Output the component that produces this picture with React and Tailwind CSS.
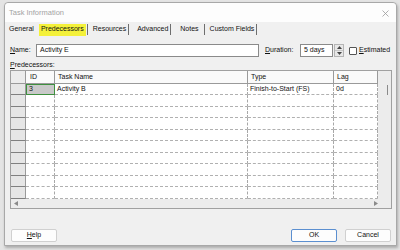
import React from "react";

const F = { fontFamily: '"Liberation Sans", Arial, sans-serif' };

function Tab({ children, active }) {
  return (
    <div className="flex items-center h-full">
      <div className={"h-[12px] flex items-center px-[2px] " + (active ? "bg-[#f4f13a]" : "")}>{children}</div>
    </div>
  );
}

function Sep() {
  return <div className="w-px h-[11px] bg-[#6e6e6e] self-center" />;
}

const rowHeights = [11, 12, 11, 12, 11, 12, 11, 12, 11, 12];

export default function App() {
  return (
    <div className="w-[400px] h-[250px] bg-[#e4e4e4] pt-[2px] pl-[4px] overflow-hidden text-[7px] text-[#111]" style={F}>
      <div className="w-[393px] h-[244px] bg-[#f0f0f0] border border-[#a8a8a8] rounded-t-[4px] shadow-[1px_2px_3px_rgba(0,0,0,0.25)] flex flex-col">
        <div className="h-[19px] bg-[#fdfdfd] rounded-t-[4px] flex items-center justify-between pl-[4px] pr-[7px]">
          <span className="text-[#a3a3a3] text-[7.5px] mt-[1px]">Task Information</span>
          <svg width="7" height="7" viewBox="0 0 7 7" className="mt-[1px]">
            <path d="M0.5 0.5 L6.5 6.5 M6.5 0.5 L0.5 6.5" stroke="#9a9a9a" strokeWidth="0.8" />
          </svg>
        </div>
        <div className="h-[15px] flex items-center pl-[2px]">
          <Tab>General</Tab>
          <div className="w-[3px]" />
          <Tab active>Predecessors</Tab>
          <div className="w-[1px]" />
          <Sep />
          <div className="w-[3px]" />
          <Tab>Resources</Tab>
          <Sep />
          <div className="w-[6px]" />
          <Tab>Advanced</Tab>
          <Sep />
          <div className="w-[7px]" />
          <Tab>Notes</Tab>
          <div className="w-[3px]" />
          <Sep />
          <div className="w-[3px]" />
          <Tab>Custom Fields</Tab>
          <Sep />
        </div>
        <div className="flex-1 flex flex-col pl-[5px] pr-[5px]">
          <div className="mt-[7px] h-[13px] flex items-center">
            <span className="w-[26px]"><u>N</u>ame:</span>
            <div className="w-[223px] h-[13px] bg-white border border-[#8a8a8a] flex items-center pl-[3px]">Activity E</div>
            <span className="ml-[6px] w-[35px]"><u>D</u>uration:</span>
            <div className="w-[33px] h-[13px] bg-white border border-[#8a8a8a] flex items-center pl-[3px]">5 days</div>
            <div className="ml-[1px] w-[10px] h-[13px] flex flex-col border border-[#b5b5b5] bg-[#e8e8e8]">
              <div className="flex-1 flex items-center justify-center border-b border-[#c8c8c8]">
                <svg width="5" height="3" viewBox="0 0 5 3"><path d="M0 3 L2.5 0 L5 3 Z" fill="#444" /></svg>
              </div>
              <div className="flex-1 flex items-center justify-center">
                <svg width="5" height="3" viewBox="0 0 5 3"><path d="M0 0 L2.5 3 L5 0 Z" fill="#444" /></svg>
              </div>
            </div>
            <div className="ml-[5px] w-[8px] h-[8px] border border-[#555] rounded-[1px] bg-white" />
            <span className="ml-[2px]"><u>E</u>stimated</span>
          </div>
          <div className="mt-[3px] h-[9px] leading-[9px]"><u>P</u>redecessors:</div>
          <div className="mt-[1px] w-[382px] h-[139px] border border-[#a0a0a0] bg-[#ececec] flex flex-col">
            <div className="flex">
              <div className="flex flex-col">
                <div className="flex h-[13px] border-b border-[#9a9a9a]">
                  <div className="w-[15px] bg-[#ececec] border-r border-[#9a9a9a]" />
                  <div className="w-[29px] bg-[#fafafa] border-r border-[#9a9a9a] pl-[4px] flex items-center">ID</div>
                  <div className="w-[193px] bg-[#fafafa] border-r border-[#9a9a9a] pl-[3px] flex items-center">Task Name</div>
                  <div className="w-[86px] bg-[#fafafa] border-r border-[#9a9a9a] pl-[3px] flex items-center">Type</div>
                  <div className="w-[44px] bg-[#fafafa] border-r border-[#9a9a9a] pl-[3px] flex items-center">Lag</div>
                </div>
                {rowHeights.map((h, i) => (
                  <div key={i} className="flex" style={{ height: h }}>
                    <div className="w-[15px] bg-[#e6e6e6] border-r border-[#9a9a9a] border-b border-b-[#808080]" />
                    {i === 0 ? (
                      <>
                        <div className="w-[29px] bg-[#c9c9c9] border border-[#3f8f3f] pl-[2px] flex items-center">3</div>
                        <div className="w-[193px] bg-white border-r border-[#a8a8a8] border-b border-dashed border-b-[#b0b0b0] pl-[2px] flex items-center">Activity B</div>
                        <div className="w-[86px] bg-white border-r border-[#a8a8a8] border-b border-dashed border-b-[#b0b0b0] pl-[2px] flex items-center">Finish-to-Start (FS)</div>
                        <div className="w-[44px] bg-white border-r border-[#a8a8a8] border-b border-dashed border-b-[#b0b0b0] pl-[2px] flex items-center">0d</div>
                      </>
                    ) : (
                      <>
                        <div className="w-[29px] bg-white border-r border-[#a8a8a8] border-b border-dashed border-b-[#b0b0b0]" />
                        <div className="w-[193px] bg-white border-r border-[#a8a8a8] border-b border-dashed border-b-[#b0b0b0]" />
                        <div className="w-[86px] bg-white border-r border-[#a8a8a8] border-b border-dashed border-b-[#b0b0b0]" />
                        <div className="w-[44px] bg-white border-r border-[#a8a8a8] border-b border-dashed border-b-[#b0b0b0]" />
                      </>
                    )}
                  </div>
                ))}
              </div>
              <div className="flex-1 flex justify-center pt-[14px] pl-[6px]">
                <div className="w-[1px] h-[10px] bg-[#8a8a8a]" />
              </div>
            </div>
            <div className="h-[9px] flex items-center justify-between px-[3px]">
              <svg width="4" height="5" viewBox="0 0 4 5"><path d="M4 0 L0 2.5 L4 5 Z" fill="#8a8a8a" /></svg>
              <svg width="4" height="5" viewBox="0 0 4 5" className="mr-[10px]"><path d="M0 0 L4 2.5 L0 5 Z" fill="#8a8a8a" /></svg>
            </div>
          </div>
          <div className="flex-1" />
          <div className="flex items-center mb-[3px]">
            <div className="ml-[1px] w-[46px] h-[13px] bg-[#fdfdfd] border border-[#d0d0d0] rounded-[2px] flex items-center justify-center"><span><u>H</u>elp</span></div>
            <div className="flex-1" />
            <div className="w-[46px] h-[13px] bg-[#fdfdfd] border border-[#5b8fd0] rounded-[2px] flex items-center justify-center">OK</div>
            <div className="ml-[8px] w-[46px] h-[13px] bg-[#fdfdfd] border border-[#d0d0d0] rounded-[2px] flex items-center justify-center">Cancel</div>
          </div>
        </div>
      </div>
    </div>
  );
}
